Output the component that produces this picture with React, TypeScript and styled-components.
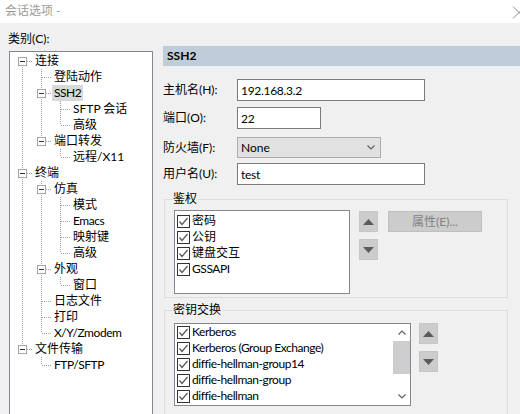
import React from 'react';
import styled, { createGlobalStyle } from 'styled-components';

const Global = createGlobalStyle`
  html, body { margin: 0; padding: 0; width: 520px; height: 414px; overflow: hidden; background: #f0f0f0; }
  body { font-family: Lato, "Noto Sans CJK SC", sans-serif; font-size: 12px; color: #000; }
  * { box-sizing: border-box; }
`;

const Window = styled.div`
  width: 520px;
  height: 414px;
  display: flex;
  flex-direction: column;
  overflow: hidden;
  background: #f0f0f0;
`;

const TitleBar = styled.div`
  height: 23px;
  flex: none;
  background: #fff;
  display: flex;
  align-items: flex-start;
  justify-content: space-between;
  padding: 3px 0 0 5px;
  color: #9c9c9c;
  line-height: 16px;
`;

const CloseGlyph = styled.svg`
  margin-top: -3px;
  flex: none;
`;

const Body = styled.div`
  flex: 1;
  display: flex;
  min-height: 0;
  overflow: hidden;
`;

const LeftCol = styled.div`
  width: 144px;
  flex: none;
  margin: 0 10px 0 9px;
  padding-top: 8px;
  display: flex;
  flex-direction: column;
`;

const CategoryLabel = styled.div`
  line-height: 16px;
  margin: 0 0 4px -1px;
`;

const TreeBox = styled.div`
  height: 400px;
  flex: none;
  background: #fff;
  border: 1px solid #828790;
  padding: 1px 0 0 3px;
`;

const TreeRow = styled.div`
  display: flex;
  align-items: center;
  height: 16px;
  white-space: nowrap;
`;

const TreeLabel = styled.span<{ $selected?: boolean; $tight?: boolean }>`
  margin-left: 1px;
  padding: 0 2px;
  line-height: 16px;
  letter-spacing: ${(p) => (p.$tight ? '-0.45px' : '0')};
  background: ${(p) => (p.$selected ? '#d9d9d9' : 'transparent')};
`;

const RightCol = styled.div`
  flex: 1;
  min-width: 0;
  padding-top: 23px;
  display: flex;
  flex-direction: column;
`;

const SectionHeader = styled.div`
  height: 20px;
  flex: none;
  background: #bfcddb;
  font-weight: bold;
  line-height: 20px;
  padding-left: 4px;
`;

const FieldRow = styled.div<{ $mt: number }>`
  display: flex;
  align-items: center;
  margin-top: ${(p) => p.$mt}px;
`;

const FieldLabel = styled.label`
  width: 74px;
  flex: none;
  line-height: 16px;
`;

const TextInput = styled.input<{ $w: number }>`
  width: ${(p) => p.$w}px;
  height: 22px;
  border: 1px solid #7a7a7a;
  background: #fff;
  padding: 0 0 0 3px;
  margin: 0;
  font: inherit;
  letter-spacing: -0.3px;
  color: #000;
  outline: none;
`;

const Select = styled.div<{ $w: number }>`
  width: ${(p) => p.$w}px;
  height: 21px;
  border: 1px solid #adadad;
  background: #e1e1e1;
  display: flex;
  align-items: center;
  justify-content: space-between;
  padding: 0 5px 0 3px;
`;

const Group = styled.fieldset<{ $mt: number; $pb: number }>`
  margin: ${(p) => p.$mt}px 12px 0 1px;
  padding: 0 0 ${(p) => p.$pb}px 7px;
  border: 1px solid #dcdcdc;
  min-width: 0;
  flex: none;
`;

const Legend = styled.legend`
  padding: 0 1px;
  line-height: 14px;
  font-size: 12px;
`;

const GroupBody = styled.div<{ $mt: number }>`
  display: flex;
  align-items: flex-start;
  margin-top: ${(p) => p.$mt}px;
  padding-left: 2px;
`;

const ListBox = styled.div<{ $w: number; $h: number }>`
  width: ${(p) => p.$w}px;
  height: ${(p) => p.$h}px;
  flex: none;
  background: #fff;
  border: 1px solid #828790;
  display: flex;
  overflow: hidden;
`;

const ListItems = styled.div<{ $pt: number }>`
  flex: 1;
  padding: ${(p) => p.$pt}px 0 0 2px;
`;

const CheckRow = styled.div`
  display: flex;
  align-items: center;
  height: 16px;
  white-space: nowrap;
`;

const CheckText = styled.span<{ $tight?: boolean }>`
  margin-left: 2px;
  line-height: 16px;
  letter-spacing: ${(p) => (p.$tight ? '-0.45px' : '0')};
`;

const ScrollBar = styled.div`
  width: 17px;
  flex: none;
  display: flex;
  flex-direction: column;
  background: #fff;
`;

const ScrollArrow = styled.div`
  height: 17px;
  flex: none;
  display: flex;
  align-items: center;
  justify-content: center;
`;

const ScrollTrack = styled.div`
  flex: 1;
`;

const ScrollThumb = styled.div`
  height: 33px;
  background: #cdcdcd;
`;

const ArrowCol = styled.div<{ $ml: number; $mt: number }>`
  display: flex;
  flex-direction: column;
  gap: 7px;
  margin-left: ${(p) => p.$ml}px;
  margin-top: ${(p) => p.$mt}px;
  flex: none;
`;

const ArrowButton = styled.div`
  width: 19px;
  height: 21px;
  background: #cccccc;
  border: 1px solid #c6c6c6;
  display: flex;
  align-items: center;
  justify-content: center;
`;

const PropsButton = styled.button`
  width: 94px;
  height: 21px;
  margin: 1px 0 0 10px;
  padding: 0;
  background: #cccccc;
  border: 1px solid #bfbfbf;
  color: #838383;
  font: inherit;
  line-height: 16px;
  flex: none;
`;

type Node = { label: string; selected?: boolean; children?: Node[] };

const tree: Node[] = [
  {
    label: '连接',
    children: [
      { label: '登陆动作' },
      { label: 'SSH2', selected: true, children: [{ label: 'SFTP 会话' }, { label: '高级' }] },
      { label: '端口转发', children: [{ label: '远程/X11' }] },
    ],
  },
  {
    label: '终端',
    children: [
      {
        label: '仿真',
        children: [{ label: '模式' }, { label: 'Emacs' }, { label: '映射键' }, { label: '高级' }],
      },
      { label: '外观', children: [{ label: '窗口' }] },
      { label: '日志文件' },
      { label: '打印' },
      { label: 'X/Y/Zmodem' },
    ],
  },
  { label: '文件传输', children: [{ label: 'FTP/SFTP' }] },
];

type Flat = {
  label: string;
  selected?: boolean;
  level: number;
  guides: boolean[];
  hasNext: boolean;
  firstRoot: boolean;
  hasChildren: boolean;
};

function flatten(nodes: Node[], level: number, guides: boolean[], out: Flat[]) {
  nodes.forEach((n, i) => {
    const hasNext = i < nodes.length - 1;
    out.push({
      label: n.label,
      selected: n.selected,
      level,
      guides,
      hasNext,
      firstRoot: level === 0 && i === 0,
      hasChildren: !!n.children,
    });
    if (n.children) flatten(n.children, level + 1, [...guides, hasNext], out);
  });
}

const rows: Flat[] = [];
flatten(tree, 0, [], rows);

const isLatin = (s: string) => /^[\x20-\x7e]+$/.test(s);

const LINE = '#a0a0a0';

function Connector({ row }: { row: Flat }) {
  const w = 19 * (row.level + 1);
  const cx = row.level * 19 + 9.5;
  return (
    <svg width={w} height={16} shapeRendering="crispEdges" style={{ flex: 'none' }}>
      {row.guides.map((g, i) =>
        g ? (
          <line key={i} x1={i * 19 + 9.5} y1={0} x2={i * 19 + 9.5} y2={16} stroke={LINE} strokeDasharray="1 1" />
        ) : null
      )}
      {!row.firstRoot && <line x1={cx} y1={0} x2={cx} y2={8} stroke={LINE} strokeDasharray="1 1" />}
      {row.hasNext && <line x1={cx} y1={8} x2={cx} y2={16} stroke={LINE} strokeDasharray="1 1" />}
      <line x1={cx + 0.5} y1={8.5} x2={w} y2={8.5} stroke={LINE} strokeDasharray="1 1" />
      {row.hasChildren && (
        <g>
          <rect x={cx - 4} y={4.5} width={8} height={8} fill="#fff" stroke="#a6a6a6" />
          <line x1={cx - 2.5} y1={8.5} x2={cx + 2.5} y2={8.5} stroke="#333" />
        </g>
      )}
    </svg>
  );
}

function CheckBox() {
  return (
    <svg width={13} height={13} style={{ flex: 'none' }}>
      <rect x={0.5} y={0.5} width={12} height={12} fill="#fff" stroke="#333" />
      <polyline points="2.5,6.5 5,9.5 10.5,3" fill="none" stroke="#555" strokeWidth={1.2} />
    </svg>
  );
}

function Triangle({ up }: { up: boolean }) {
  return (
    <svg width={11} height={6}>
      <polygon points={up ? '0,6 5.5,0 11,6' : '0,0 5.5,6 11,0'} fill="#5c5c5c" />
    </svg>
  );
}

function Chevron({ up }: { up: boolean }) {
  return (
    <svg width={8} height={5}>
      <polyline
        points={up ? '0.5,4.5 4,1 7.5,4.5' : '0.5,0.5 4,4 7.5,0.5'}
        fill="none"
        stroke="#606060"
        strokeWidth={1.2}
      />
    </svg>
  );
}

const authItems = ['密码', '公钥', '键盘交互', 'GSSAPI'];
const kexItems = [
  'Kerberos',
  'Kerberos (Group Exchange)',
  'diffie-hellman-group14',
  'diffie-hellman-group',
  'diffie-hellman',
];

export default function App() {
  return (
    <>
      <Global />
      <Window>
        <TitleBar>
          <span>会话选项 -</span>
          <CloseGlyph width={8} height={23}>
            <line x1={1} y1={6.5} x2={13} y2={18.5} stroke="#8a8a8a" />
            <line x1={13} y1={6.5} x2={1} y2={18.5} stroke="#8a8a8a" />
          </CloseGlyph>
        </TitleBar>
        <Body>
          <LeftCol>
            <CategoryLabel>类别(C):</CategoryLabel>
            <TreeBox>
              {rows.map((r, i) => (
                <TreeRow key={i}>
                  <Connector row={r} />
                  <TreeLabel $selected={r.selected} $tight={isLatin(r.label)}>
                    {r.label}
                  </TreeLabel>
                </TreeRow>
              ))}
            </TreeBox>
          </LeftCol>
          <RightCol>
            <SectionHeader>SSH2</SectionHeader>
            <FieldRow $mt={13}>
              <FieldLabel>主机名(H):</FieldLabel>
              <TextInput $w={188} readOnly value="192.168.3.2" />
            </FieldRow>
            <FieldRow $mt={6}>
              <FieldLabel>端口(O):</FieldLabel>
              <TextInput $w={84} readOnly value="22" />
            </FieldRow>
            <FieldRow $mt={8}>
              <FieldLabel>防火墙(F):</FieldLabel>
              <Select $w={144}>
                <span>None</span>
                <Chevron up={false} />
              </Select>
            </FieldRow>
            <FieldRow $mt={5}>
              <FieldLabel>用户名(U):</FieldLabel>
              <TextInput $w={188} readOnly value="test" />
            </FieldRow>

            <Group $mt={7} $pb={3}>
              <Legend>鉴权</Legend>
              <GroupBody $mt={4}>
                <ListBox $w={176} $h={84}>
                  <ListItems $pt={2}>
                    {authItems.map((t) => (
                      <CheckRow key={t}>
                        <CheckBox />
                        <CheckText $tight={isLatin(t)}>{t}</CheckText>
                      </CheckRow>
                    ))}
                  </ListItems>
                </ListBox>
                <ArrowCol $ml={9} $mt={1}>
                  <ArrowButton>
                    <Triangle up />
                  </ArrowButton>
                  <ArrowButton>
                    <Triangle up={false} />
                  </ArrowButton>
                </ArrowCol>
                <PropsButton disabled>属性(E)...</PropsButton>
              </GroupBody>
            </Group>

            <Group $mt={5} $pb={20}>
              <Legend>密钥交换</Legend>
              <GroupBody $mt={6}>
                <ListBox $w={237} $h={83}>
                  <ListItems $pt={0}>
                    {kexItems.map((t) => (
                      <CheckRow key={t}>
                        <CheckBox />
                        <CheckText $tight>{t}</CheckText>
                      </CheckRow>
                    ))}
                  </ListItems>
                  <ScrollBar>
                    <ScrollArrow>
                      <Chevron up />
                    </ScrollArrow>
                    <ScrollTrack>
                      <ScrollThumb />
                    </ScrollTrack>
                    <ScrollArrow>
                      <Chevron up={false} />
                    </ScrollArrow>
                  </ScrollBar>
                </ListBox>
                <ArrowCol $ml={8} $mt={0}>
                  <ArrowButton>
                    <Triangle up />
                  </ArrowButton>
                  <ArrowButton>
                    <Triangle up={false} />
                  </ArrowButton>
                </ArrowCol>
              </GroupBody>
            </Group>
          </RightCol>
        </Body>
      </Window>
    </>
  );
}
